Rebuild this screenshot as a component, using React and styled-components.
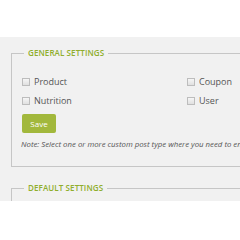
import styled, { createGlobalStyle } from 'styled-components';

const GlobalStyle = createGlobalStyle`
  html, body {
    margin: 0;
    padding: 0;
    background: #fff;
    font-family: 'Open Sans', 'Liberation Sans', sans-serif;
    overflow: hidden;
  }
`;

const Page = styled.div`
  width: 240px;
  height: 240px;
  overflow: hidden;
  padding-top: 37px;
  box-sizing: border-box;
`;

const Panel = styled.div`
  background: #f1f1f1;
  height: 164px;
  overflow: hidden;
  padding: 10px 0 0 11px;
  box-sizing: border-box;
`;

const Fieldset = styled.fieldset`
  width: 320px;
  margin: 0 0 ${(p) => p.$gap || 0}px 0;
  padding: 13px 10px 17px 10px;
  border: 1px solid #c6c6c6;
  box-sizing: border-box;
`;

const Legend = styled.legend`
  margin-left: 2px;
  padding: 0 4px;
  color: #8fae2c;
  font-size: 8px;
  font-weight: 600;
  line-height: 12px;
  letter-spacing: 0.1px;
`;

const Options = styled.div`
  display: grid;
  grid-template-columns: 165px 100px;
  grid-auto-rows: 19px;
  align-items: center;
`;

const Option = styled.label`
  display: flex;
  align-items: center;
  gap: 4px;
  font-size: 9px;
  color: #555;
`;

const Box = styled.input.attrs({ type: 'checkbox' })`
  appearance: none;
  margin: 0;
  width: 8px;
  height: 8px;
  border: 1px solid #bdbdbd;
  background: linear-gradient(#f6f6f6, #e0e0e0);
  box-sizing: border-box;
`;

const SaveButton = styled.button`
  margin-top: 3px;
  width: 34px;
  height: 19px;
  padding: 0;
  border: none;
  border-radius: 2px;
  background: #a2b83c;
  color: #fff;
  font-family: inherit;
  font-size: 8px;
`;

const Note = styled.p`
  margin: 6px 0 0 -1px;
  font-size: 7.8px;
  font-style: italic;
  color: #555;
  white-space: nowrap;
`;

export default function App() {
  return (
    <Page>
      <GlobalStyle />
      <Panel>
        <Fieldset $gap={15}>
          <Legend>GENERAL SETTINGS</Legend>
          <Options>
            <Option><Box />Product</Option>
            <Option><Box />Coupon</Option>
            <Option><Box />Nutrition</Option>
            <Option><Box />User</Option>
          </Options>
          <SaveButton>Save</SaveButton>
          <Note>Note: Select one or more custom post type where you need to enable the settings.</Note>
        </Fieldset>
        <Fieldset>
          <Legend>DEFAULT SETTINGS</Legend>
          <Options>
            <Option><Box />Product</Option>
          </Options>
        </Fieldset>
      </Panel>
    </Page>
  );
}
